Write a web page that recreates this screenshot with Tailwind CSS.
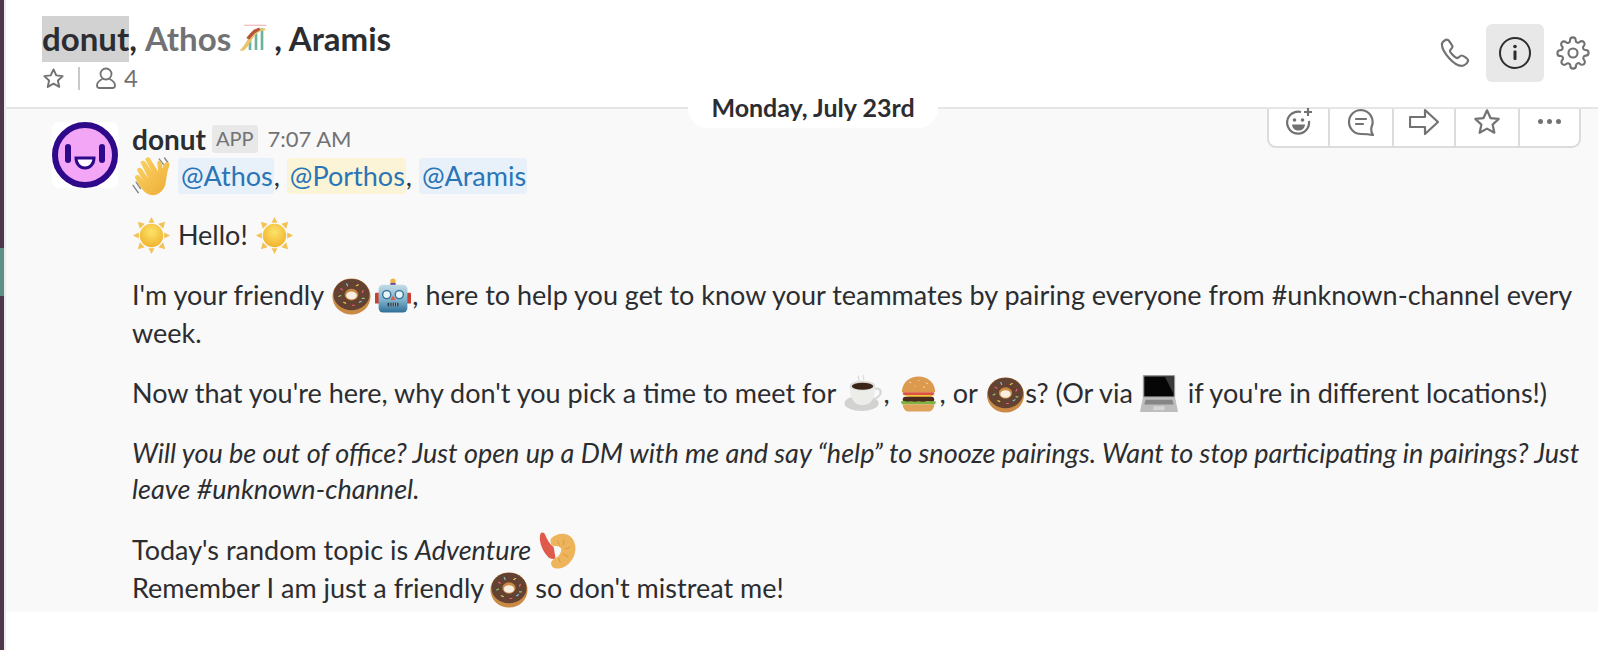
<!DOCTYPE html>
<html lang="en">
<head>
    <meta charset="UTF-8">
    <title>donut, Athos, Aramis</title>
    <script src="https://cdn.jsdelivr.net/npm/@tailwindcss/browser@4"></script>
</head>
<body class="bg-white text-[#2c2d30] font-['Lato',sans-serif] overflow-hidden">

    <!-- Emoji drawings, reused below with <use> -->
    <svg class="absolute w-0 h-0" width="0" height="0">
        <defs>
            <radialGradient id="sunCore" cx="50%" cy="35%" r="65%"><stop offset="0" stop-color="#fde36a"/><stop offset="1" stop-color="#f1b32e"/></radialGradient>
            <linearGradient id="handFill" x1="0" y1="0" x2="1" y2="1"><stop offset="0" stop-color="#fbd567"/><stop offset="1" stop-color="#eeac35"/></linearGradient>
            <linearGradient id="robotFill" x1="0" y1="0" x2="0" y2="1"><stop offset="0" stop-color="#c3dbe6"/><stop offset="0.55" stop-color="#7fb2cd"/><stop offset="1" stop-color="#2f6f96"/></linearGradient>
            <symbol id="e-sun" viewBox="0 0 40 40">
                <g fill="#f3c254">
                    <path d="M20 1l3 6h-6z"/><path d="M20 39l3-6h-6z"/><path d="M1 20l6-3v6z"/><path d="M39 20l-6-3v6z"/>
                    <path d="M6 6l7 2-5 5z"/><path d="M34 6l-7 2 5 5z"/><path d="M6 34l7-2-5-5z"/><path d="M34 34l-7-2 5-5z"/>
                </g>
                <circle cx="20" cy="20" r="12" fill="url(#sunCore)"/>
            </symbol>
            <symbol id="e-donut" viewBox="0 0 40 40">
                <ellipse cx="20" cy="21" rx="19.500" ry="18.500" fill="#c98a45"/>
                <ellipse cx="20" cy="19" rx="18.500" ry="16" fill="#644232"/>
                <ellipse cx="20" cy="19" rx="7" ry="6" fill="#c98a45"/>
                <ellipse cx="20" cy="20" rx="5.500" ry="4" fill="#f6efe2"/>
                <g stroke-width="1.200" stroke-linecap="round">
                    <path d="M9 13l2 1" stroke="#e8607a"/><path d="M15 8l1 2" stroke="#7cc8e8"/><path d="M27 9l-2 1" stroke="#f3d04f"/>
                    <path d="M32 15l-1 2" stroke="#e8607a"/><path d="M7 21l2-1" stroke="#8fd07c"/><path d="M12 27l2 1" stroke="#f3d04f"/>
                    <path d="M28 27l2-1" stroke="#7cc8e8"/><path d="M33 23l-2 0" stroke="#8fd07c"/><path d="M21 30l2 0" stroke="#e8607a"/>
                </g>
            </symbol>
            <symbol id="e-robot" viewBox="0 0 40 40">
                <circle cx="20" cy="4" r="3" fill="#f2b544"/>
                <rect x="17" y="6" width="6" height="3" fill="#6a4a9c"/>
                <rect x="0" y="17" width="5" height="12" rx="1" fill="#c8402f"/>
                <rect x="35" y="17" width="5" height="12" rx="1" fill="#c8402f"/>
                <rect x="4" y="8" width="32" height="31" rx="5" fill="url(#robotFill)"/>
                <circle cx="13" cy="19" r="4.500" fill="#e8f4f8" stroke="#2f6f96" stroke-width="1.500"/>
                <circle cx="27" cy="19" r="4.500" fill="#e8f4f8" stroke="#2f6f96" stroke-width="1.500"/>
                <path d="M20 20l3 5h-6z" fill="#d9604d"/>
                <rect x="14" y="28" width="12" height="4" rx="1" fill="#1d3a4e"/>
                <path d="M16.500 28v4M19 28v4M21.500 28v4M24 28v4" stroke="#cfe0e8" stroke-width=".8"/>
            </symbol>
            <symbol id="e-coffee" viewBox="0 0 40 40">
                <path d="M15 2c-2 2 2 3 0 5M20 1c-2 2 2 3 0 5" fill="none" stroke="#d8d8d8" stroke-width="1.200"/>
                <ellipse cx="18" cy="30" rx="17.500" ry="8" fill="#d2d2d0"/>
                <path d="M30 16c6-3 9 1 7 5-2 3-6 5-9 5" fill="none" stroke="#d6d6d4" stroke-width="2.200"/>
                <path d="M6 12h26c0 11-3 20-13 20S6 23 6 12z" fill="#ecece9"/>
                <ellipse cx="19" cy="12" rx="13" ry="5" fill="#dcdcda"/>
                <ellipse cx="19" cy="12.500" rx="11" ry="3.600" fill="#3a2418"/>
            </symbol>
            <symbol id="e-burger" viewBox="0 0 40 40">
                <path d="M2 18C2 7 11 1 20 1s18 6 18 17z" fill="#dc9a4f"/>
                <path d="M10 7l2 1M20 5l1 1M28 8l2 1M16 11l1 1M25 12l2 1" stroke="#f6e3bd" stroke-width="1"/>
                <rect x="3" y="18" width="34" height="3" rx="1.500" fill="#d9533f"/>
                <path d="M3 21h34l-7 4-6-2-8 2-7-2z" fill="#f5c53d"/>
                <rect x="3" y="23" width="34" height="6" rx="3" fill="#4a2b1c"/>
                <path d="M1 28c3-2 6 1 9 0s5 1 8 0 6 1 9 0 8 0 12 0l-1 3H2z" fill="#7fb243"/>
                <path d="M3 31h34c0 5-3 8-7 8H10c-4 0-7-3-7-8z" fill="#dfa25a"/>
            </symbol>
            <symbol id="e-laptop" viewBox="0 0 40 40">
                <rect x="3" y="0" width="34" height="24" rx="1" fill="#9a9a9a"/>
                <rect x="4.500" y="1.500" width="31" height="21" fill="#060606"/>
                <path d="M26 1.500h9.500V20z" fill="#3a3a3a"/>
                <path d="M3 24h34l3 15H0z" fill="#bdbdbd"/>
                <path d="M6 26h28l1.500 5h-31z" fill="#868686"/>
                <rect x="14" y="33" width="12" height="4" fill="#d6d6d6"/>
            </symbol>
            <symbol id="e-shrimp" viewBox="0 0 40 40">
                <path d="M2 2c-2 6 1 16 7 23 2 3 6 4 9 3l-2-12C12 13 9 8 7 3 6 0 3 0 2 2z" fill="#df5a4b"/>
                <path d="M13 7c6-6 17-7 22-1 6 7 5 19-2 26-5 6-14 8-18 5-3-3-2-7 2-9 4-2 7-5 7-10-1-3-5-4-8-3-2 0-4-3-3-8z" fill="#eeb45c"/>
                <path d="M20 9l2 5M27 8l-1 6M33 16l-5 2M31 26l-5-3M23 32l-2-5" stroke="#d99540" stroke-width="1"/>
            </symbol>
            <symbol id="e-wave" viewBox="0 0 40 40">
                <path d="M1 27l5 7M4 24l4 6M26 2l4 5M31 1l3 4" stroke="#8a8a8a" stroke-width="1.400" fill="none" stroke-linecap="round"/>
                <path d="M8 5c1-2 4-2 5 0l6 9-6-11c-1-2 2-4 4-2l8 13-1-8c0-3 3-3 4-1l1 6c1-3 3-7 5-6 2 0 2 3 1 5-2 5-2 10-3 15-1 7-8 13-15 11C11 34 7 28 3 20c-1-3 3-4 5-1l3 4-6-10c-1-2 2-4 4-2l7 10z" fill="url(#handFill)"/>
            </symbol>
            <symbol id="e-coaster" viewBox="0 0 40 40">
                <path d="M8 3h30" stroke="#e88d8d" stroke-width="1"/>
                <path d="M16 36V18M24 36V11M32 36V7" stroke="#69b39a" stroke-width="3.500"/>
                <path d="M2 37C10 30 14 16 24 10c4-2 8-3 12-3v3c-10 0-15 8-19 15-3 5-6 10-10 12z" fill="#eac56c"/>
                <path d="M11 20l5-6 5-5 7-3 2 3-8 5-7 8z" fill="#b4553c"/>
            </symbol>
        </defs>
    </svg>

    <div class="flex h-[650px]">
        <!-- sliver of the team sidebar -->
        <div class="w-[4px] shrink-0 bg-[#4d394b] flex flex-col pt-[248px]">
            <div class="h-[48px] bg-[#5e9186]"></div>
        </div>
        <div class="w-[2px] shrink-0 bg-[#ececec]"></div>

        <div class="flex-1 relative">
            <!-- channel header -->
            <header class="h-[109px] border-b-2 border-[#e6e6e6] flex justify-between pl-[36px] pr-[8px] pt-[16px]">
                <div>
                    <div class="flex items-start h-[46px] text-[33px] font-bold leading-[44px] text-[#2c2d30]">
                        <span class="bg-[#d2d2d2] h-[46px]">donut</span><span>,&nbsp;</span><span class="text-[#717274]">Athos</span>
                        <svg class="w-[30px] h-[36px] ml-[7px] mr-[6px] mt-[4px]"><use href="#e-coaster"/></svg>
                        <span>,&nbsp;Aramis</span>
                    </div>
                    <div class="flex items-center mt-[2px] text-[24px] text-[#717274] leading-[28px]">
                        <svg class="w-[23px] h-[23px]" viewBox="0 0 24 24" fill="none" stroke="#717274" stroke-width="2" stroke-linejoin="round"><path d="M12 2.500l2.900 6.200 6.700.8-5 4.600 1.400 6.700L12 17.400l-6 3.400 1.400-6.700-5-4.600 6.700-.8z"/></svg>
                        <div class="w-[2px] h-[23px] bg-[#c9c9c9] ml-[13px] mr-[16px]"></div>
                        <svg class="w-[20px] h-[22px]" viewBox="0 0 20 22" fill="none" stroke="#717274" stroke-width="1.800"><circle cx="10" cy="7" r="5.500"/><path d="M6.500 12C3 13.500 1 16 1 18.500c0 1.500 1 2.500 2.500 2.500h13c1.500 0 2.500-1 2.500-2.500 0-2.500-2-5-5.500-6.500"/></svg>
                        <span class="ml-[8px]">4</span>
                    </div>
                </div>
                <div class="flex items-center h-[58px] mt-[8px]">
                    <svg class="w-[30px] h-[30px] mr-[16px]" viewBox="0 0 30 30" fill="none" stroke="#717274" stroke-width="2.200" stroke-linejoin="round"><path d="M2 5.500C3 3 6 1 8 2c1 .5 4 5 4.500 6.500.3 1-2 3-2.500 4-.5 1.500 5.500 8 7.500 7.500 1-.3 3-2.500 4-2.500 1.500 0 6 3 6.500 4.500.5 2-2 4.500-4.500 5.500C15 30 1 13 2 5.500z"/></svg>
                    <div class="w-[58px] h-[58px] bg-[#e8e8e8] rounded-[6px] flex items-center justify-center">
                        <svg class="w-[32px] h-[32px]" viewBox="0 0 32 32"><circle cx="16" cy="16" r="15" fill="none" stroke="#2c2d30" stroke-width="2"/><circle cx="16" cy="9.500" r="1.800" fill="#2c2d30"/><rect x="14.500" y="13.500" width="3" height="9.500" rx="1" fill="#2c2d30"/></svg>
                    </div>
                    <svg class="w-[34px] h-[34px] ml-[12px]" viewBox="0 0 24 24" fill="none" stroke="#717274" stroke-width="1.500" stroke-linecap="round" stroke-linejoin="round"><circle cx="12" cy="12" r="3.200"/><path d="M19.400 15a1.650 1.650 0 0 0 .33 1.820l.06.06a2 2 0 1 1-2.830 2.830l-.06-.06a1.650 1.650 0 0 0-2.800 1.170V21a2 2 0 0 1-4 0v-.09A1.650 1.650 0 0 0 7.300 19.730l-.06.06a2 2 0 1 1-2.830-2.830l.06-.06a1.650 1.650 0 0 0-1.170-2.800H3a2 2 0 0 1 0-4h.09A1.650 1.650 0 0 0 4.270 7.300l-.06-.06a2 2 0 1 1 2.830-2.830l.06.06a1.650 1.650 0 0 0 2.800-1.170V3a2 2 0 0 1 4 0v.09a1.650 1.650 0 0 0 2.800 1.170l.06-.06a2 2 0 1 1 2.830 2.830l-.06.06a1.650 1.650 0 0 0 1.170 2.800H21a2 2 0 0 1 0 4h-.09a1.650 1.650 0 0 0-1.510 1z"/></svg>
                </div>
            </header>

            <!-- date divider -->
            <div class="absolute left-[682px] top-[87px] w-[250px] h-[41px] bg-white rounded-[20px] flex items-center justify-center text-[25px] font-bold">Monday, July 23rd</div>

            <!-- hover actions -->
            <div class="absolute left-[1261px] top-[109px] w-[314px] h-[39px] bg-white border-2 border-t-0 border-[#dcdcdc] rounded-b-[9px] flex divide-x-2 divide-[#dcdcdc]">
                <div class="w-[61px] flex items-center justify-center pb-[12px]">
                    <svg class="w-[30px] h-[30px]" viewBox="0 0 30 30" fill="none" stroke="#717274" stroke-width="2.200"><path d="M17 5a11 11 0 1 0 8 9"/><path d="M24 1v8M20 5h8"/><circle cx="10.500" cy="13" r="1.800" fill="#717274" stroke="none"/><circle cx="18.500" cy="13" r="1.800" fill="#717274" stroke="none"/><path d="M8 17.500h13c-.5 4-3 6-6.500 6S8.500 21.500 8 17.500z" fill="#717274" stroke="none"/></svg>
                </div>
                <div class="w-[64px] flex items-center justify-center pb-[12px]">
                    <svg class="w-[28px] h-[28px]" viewBox="0 0 28 28" fill="none" stroke="#717274" stroke-width="2.200" stroke-linejoin="round"><path d="M14 2a12 12 0 1 0 0 24c3 0 7 0 12 1-2-2-2-5-1.500-8A12 12 0 0 0 14 2z"/><path d="M9 11h10M9 16h7" stroke-linecap="round"/></svg>
                </div>
                <div class="w-[62px] flex items-center justify-center pb-[12px]">
                    <svg class="w-[30px] h-[28px]" viewBox="0 0 30 28" fill="none" stroke="#717274" stroke-width="2.200" stroke-linejoin="round"><path d="M1 9h15V2l13 12-13 12v-7H1z"/></svg>
                </div>
                <div class="w-[64px] flex items-center justify-center pb-[12px]">
                    <svg class="w-[28px] h-[28px]" viewBox="0 0 24 24" fill="none" stroke="#717274" stroke-width="1.900" stroke-linejoin="round"><path d="M12 2l3 6.600 7 .8-5.200 4.800 1.500 7L12 17.700l-6.300 3.500 1.500-7L2 9.400l7-.8z"/></svg>
                </div>
                <div class="flex-1 flex items-center justify-center gap-[4px] pb-[12px]">
                    <span class="w-[5px] h-[5px] rounded-full bg-[#717274]"></span>
                    <span class="w-[5px] h-[5px] rounded-full bg-[#717274]"></span>
                    <span class="w-[5px] h-[5px] rounded-full bg-[#717274]"></span>
                </div>
            </div>

            <!-- message -->
            <div class="h-[503px] bg-[#f9f9f9] flex pl-[46px] pt-[13px]">
                <div class="w-[66px] h-[66px] shrink-0 bg-white rounded-[6px] flex items-center justify-center">
                    <svg class="w-[66px] h-[66px]" viewBox="0 0 66 66">
                        <circle cx="33" cy="33" r="30" fill="#f3a5f6" stroke="#2e0a8a" stroke-width="6"/>
                        <rect x="13" y="22" width="6" height="19" rx="3" fill="#2e0a8a"/>
                        <rect x="47" y="22" width="6" height="19" rx="3" fill="#2e0a8a"/>
                        <path d="M24 36h18c0 6-4 10-9 10s-9-4-9-10z" fill="#fff" stroke="#2e0a8a" stroke-width="3"/>
                    </svg>
                </div>
                <div class="ml-[14px] mt-[2px] w-[1465px] text-[27px] leading-[36px]">
                    <div class="flex items-center h-[30px] leading-[30px]">
                        <span class="font-bold text-[28px]">donut</span>
                        <span class="ml-[6px] px-[4px] h-[28px] leading-[27px] bg-[#e8e8e8] rounded-[3px] text-[20px] text-[#717274]">APP</span>
                        <span class="ml-[10px] text-[22px] text-[#717274]">7:07 AM</span>
                    </div>
                    <p class="h-[36px] mt-[4px] flex items-center">
                        <svg class="w-[42px] h-[42px] mr-[4px] mt-[4px] shrink-0"><use href="#e-wave"/></svg>
                        <span class="bg-[#e8f1f9] text-[#2a74b8] rounded-[3px] pl-[3px] pr-[1px]">@Athos</span>,&nbsp;<span class="bg-[#fcf4d6] text-[#2a74b8] rounded-[3px] pl-[3px] pr-[1px]">@Porthos</span>,&nbsp;<span class="bg-[#e8f1f9] text-[#2a74b8] rounded-[3px] pl-[3px] pr-[1px]">@Aramis</span>
                    </p>
                    <p class="mt-[22px]"><svg class="inline-block w-[39px] h-[39px] align-[-10px]"><use href="#e-sun"/></svg> Hello! <svg class="inline-block w-[39px] h-[39px] align-[-10px]"><use href="#e-sun"/></svg></p>
                    <p class="mt-[21px]">I'm your friendly <svg class="inline-block w-[39px] h-[39px] ml-[2px] align-[-10px]"><use href="#e-donut"/></svg><svg class="inline-block w-[36px] h-[39px] ml-[4px] mr-[1px] align-[-10px]"><use href="#e-robot"/></svg>, here to help you get to know your teammates by pairing everyone from #unknown-channel every week.</p>
                    <p class="mt-[23px]">Now that you're here, why don't you pick a time to meet for <svg class="inline-block w-[41px] h-[39px] align-[-10px]"><use href="#e-coffee"/></svg>, <svg class="inline-block w-[37px] h-[38px] ml-[3px] mr-[3px] align-[-10px]"><use href="#e-burger"/></svg>, or <svg class="inline-block w-[39px] h-[38px] ml-[2px] align-[-10px]"><use href="#e-donut"/></svg>s? (Or via <svg class="inline-block w-[38px] h-[38px] mr-[3px] align-[-10px]"><use href="#e-laptop"/></svg> if you're in different locations!)</p>
                    <p class="mt-[22px] italic">Will you be out of office? Just open up a DM with me and say “help” to snooze pairings. Want to stop participating in pairings? Just leave #unknown-channel.</p>
                    <p class="mt-[25px]">Today's random topic is <em>Adventure</em> <svg class="inline-block w-[39px] h-[38px] align-[-10px]"><use href="#e-shrimp"/></svg><br>Remember I am just a friendly <svg class="inline-block w-[38px] h-[38px] align-[-10px]"><use href="#e-donut"/></svg> so don't mistreat me!</p>
                </div>
            </div>
        </div>
    </div>
</body>
</html>
